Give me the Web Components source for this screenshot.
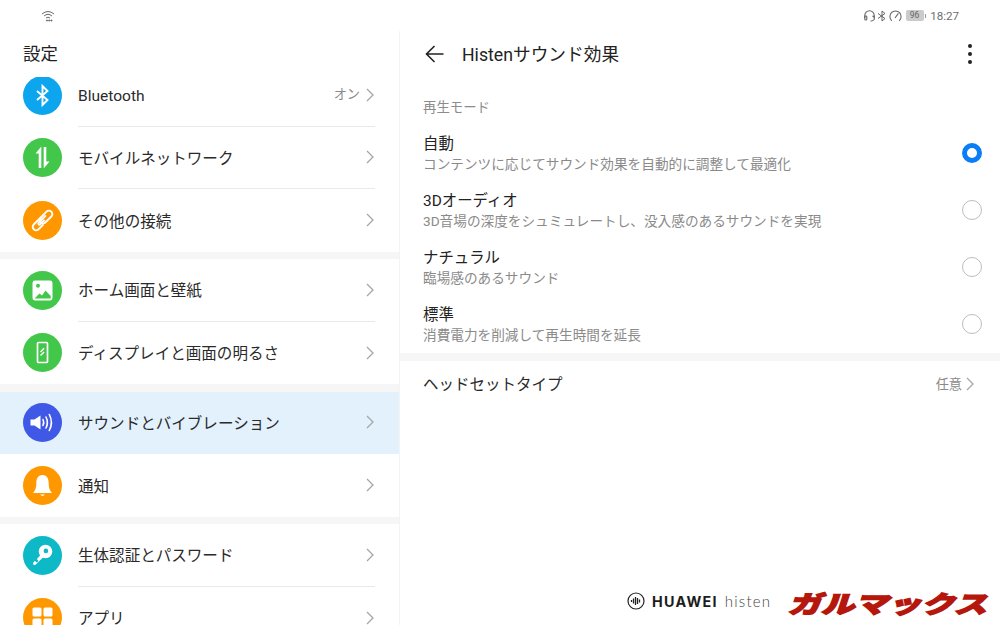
<!DOCTYPE html>
<html lang="ja">
<head>
<meta charset="utf-8">
<title>Histen</title>
<style>
html, body { margin: 0; padding: 0; background: #fff; }
body { width: 1000px; height: 625px; overflow: hidden; font-family: Roboto, "Noto Sans CJK JP", "Noto Sans", sans-serif; color: #1f1f1f; }
</style>
</head>
<body>
<tablet-screen>
	<status-bar slot="status"></status-bar>
	<settings-pane slot="left">
		<settings-group first>
			<settings-row label="Bluetooth" value="オン" color="#0ca5ee" icon="bt"></settings-row>
			<settings-row label="モバイルネットワーク" color="#43c74a" icon="mobile"></settings-row>
			<settings-row label="その他の接続" color="#ff9800" icon="link" last></settings-row>
		</settings-group>
		<settings-group>
			<settings-row label="ホーム画面と壁紙" color="#43c74a" icon="image"></settings-row>
			<settings-row label="ディスプレイと画面の明るさ" color="#43c74a" icon="phone" last></settings-row>
		</settings-group>
		<settings-group>
			<settings-row label="サウンドとバイブレーション" color="#4058e6" icon="sound" active></settings-row>
			<settings-row label="通知" color="#ff9800" icon="bell" last></settings-row>
		</settings-group>
		<settings-group>
			<settings-row label="生体認証とパスワード" color="#0db9c6" icon="key"></settings-row>
			<settings-row label="アプリ" color="#ff9800" icon="apps" last></settings-row>
		</settings-group>
	</settings-pane>
	<histen-pane slot="right">
		<option-row title="自動" sub="コンテンツに応じてサウンド効果を自動的に調整して最適化" checked></option-row>
		<option-row title="3Dオーディオ" sub="3D音場の深度をシュミュレートし、没入感のあるサウンドを実現"></option-row>
		<option-row title="ナチュラル" sub="臨場感のあるサウンド"></option-row>
		<option-row title="標準" sub="消費電力を削減して再生時間を延長"></option-row>
	</histen-pane>
	<brand-marks slot="marks"></brand-marks>
</tablet-screen>

<script>
(function() {
	var CHEVRON = '<svg width="8" height="14" viewBox="0 0 8 14" style="flex:none;margin-right:1px"><path d="M1 1 L7 7 L1 13" fill="none" stroke="#a6a6a6" stroke-width="1.3"/></svg>';

	// icon glyphs, 0,0 is the middle of the circle
	var ICONS = {
		bt: '<path d="M-5.5 -4.5 L5 4.5 L0 9.5 V-9.5 L5 -4.5 L-5.5 4.5" fill="none" stroke="#fff" stroke-width="1.9"/>',
		mobile: '<path d="M-1.2 10.5 V-11 L-7 -4 H-3.8 V10.5 Z M1.2 -10.5 V11 L7 4 H3.8 V-10.5 Z" fill="#fff"/>',
		link: '<g fill="none" stroke="#fff" stroke-width="1.9" transform="rotate(45)"><rect x="-3.4" y="-12.5" width="6.8" height="15" rx="3.4"/><path d="M-1.2 -6 V4 Q-1.2 5.5 0 5.5 Q1.2 5.5 1.2 4 V-2"/><path d="M-3.4 -1 V9 A3.4 3.4 0 0 0 3.4 9 V2"/></g>',
		image: '<rect x="-10" y="-10" width="20" height="20" rx="2.4" fill="#fff"/><circle cx="-4.5" cy="-4.8" r="2" fill="#43c74a"/><path d="M-8 8 L-3 3 L-0.5 5 L3 0 L8.2 5.5 V8 Z" fill="#43c74a"/>',
		phone: '<rect x="-5" y="-10" width="10" height="20" rx="1" fill="none" stroke="#fff" stroke-width="1.7"/><path d="M-2 -0.5 L1.6 -4.2 M-2 3 L1.6 -0.6" stroke="#fff" stroke-width="1.4"/>',
		sound: '<path d="M-12 -3 H-8 L-2 -7 V7 L-8 3 H-12 Z" fill="#fff"/><g fill="none" stroke="#fff" stroke-width="1.6" stroke-linecap="round"><path d="M0.5 -3 Q2 0 0.5 3"/><path d="M3.5 -5.5 Q6.2 0 3.5 5.5"/><path d="M6.8 -8 Q11 0 6.8 8"/></g>',
		bell: '<path d="M0 -10.5 C-5 -10.5 -6.2 -6 -6.2 -2 C-6.2 2 -7 5 -9.5 7.5 H9.5 C7 5 6.2 2 6.2 -2 C6.2 -6 5 -10.5 0 -10.5 Z" fill="#fff"/><path d="M-2.4 9 H2.4 Q0 11.8 -2.4 9 Z" fill="#fff"/>',
		key: '<circle cx="3" cy="-4" r="6.8" fill="#fff"/><circle cx="3.4" cy="-4.6" r="2.3" fill="#0db9c6"/><path d="M-1.5 -1 L1 1.5 L-7 9.2 Q-8 10 -9.2 9 Q-10 8 -9.2 7 L-7.6 5.4 L-5.6 7 L-4 5.4 L-5.6 3.6 Z" fill="#fff"/>',
		apps: '<g fill="#fff"><rect x="-10" y="-10" width="9" height="9" rx="1.6"/><rect x="1" y="-10" width="9" height="9" rx="1.6"/><rect x="-10" y="1" width="9" height="9" rx="1.6"/><rect x="1" y="1" width="9" height="9" rx="1.6"/></g>'
	};

	class TabletScreen extends HTMLElement {
		constructor() {
			super();
			this.attachShadow({mode: "open"}).innerHTML = `
				<style>
				:host { display: grid; grid-template-columns: 400px 600px; grid-template-rows: 31px 594px; width: 1000px; height: 625px; position: relative; overflow: hidden; background: #fff; }
				.status { grid-column: 1 / 3; }
				.left { display: block; min-height: 0; border-right: 1px solid #f4f4f4; box-sizing: border-box; }
				</style>
				<div class="status"><slot name="status"></slot></div>
				<div class="left"><slot name="left"></slot></div>
				<div><slot name="right"></slot></div>
				<slot name="marks"></slot>
			`;
		}
	}

	class StatusBar extends HTMLElement {
		constructor() {
			super();
			this.attachShadow({mode: "open"}).innerHTML = `
				<style>
				:host { display: flex; align-items: center; justify-content: space-between; height: 31px; padding: 0 41px 0 41px; box-sizing: border-box; color: #707070; }
				.right { display: flex; align-items: center; gap: 2px; }
				.time { font: 11.6px "Roboto", sans-serif; margin-left: 2px; }
				.batt { display: flex; align-items: center; margin-left: 2px; }
				.cell { width: 18px; height: 11px; background: #cbcbcb; border-radius: 2px; font: 8.5px/11px "Roboto", sans-serif; text-align: center; color: #666; }
				.tip { width: 1.5px; height: 4px; background: #999; margin-left: 1px; }
				svg { display: block; }
				</style>
				<svg width="14" height="12" viewBox="0 0 14 12" fill="none" stroke="#6b6b6b" stroke-width="1"><path d="M1 4 Q7 -1 13 4"/><path d="M3 6 Q7 2.6 11 6"/><path d="M5 8 Q7 6.4 9 8"/><circle cx="6" cy="10.5" r=".6" fill="#6b6b6b"/><circle cx="8.2" cy="10.5" r=".6" fill="#6b6b6b"/><circle cx="10.4" cy="10.5" r=".6" fill="#6b6b6b"/></svg>
				<div class="right">
					<svg width="11" height="12" viewBox="0 0 11 12" fill="none" stroke="#666" stroke-width="1.1"><path d="M.8 8 V5.5 A4.7 4.7 0 0 1 10.2 5.5 V8"/><rect x=".8" y="6" width="2" height="4" rx=".8"/><path d="M8.2 6.2 H10.2 V9.5 Q8.6 11.4 6.5 11"/></svg>
					<svg width="10" height="12" viewBox="0 0 10 12" fill="none" stroke="#666" stroke-width="1"><path d="M1 3.5 L8 8.5 L5 11 V1 L8 3.5 L1 8.5"/></svg>
					<svg width="13" height="12" viewBox="0 0 13 12" fill="none" stroke="#666" stroke-width="1.1"><path d="M2.8 10.8 A5.6 5.6 0 1 1 10.2 10.8"/><path d="M6 8 L9.4 3.4"/></svg>
					<div class="batt"><div class="cell">96</div><div class="tip"></div></div>
					<span class="time">18:27</span>
				</div>
			`;
		}
	}

	class SettingsPane extends HTMLElement {
		constructor() {
			super();
			this.attachShadow({mode: "open"}).innerHTML = `
				<style>
				:host { display: flex; flex-direction: column; height: 594px; overflow: hidden; }
				h1 { margin: 0; padding: 0 0 0 23px; height: 46px; font-size: 17.4px; font-weight: 400; line-height: 46px; flex: none; color: #222; }
				.list { flex: 1; overflow: hidden; min-height: 0; }
				.inner { margin-top: -13px; display: flex; flex-direction: column; gap: 7.5px; }
				</style>
				<h1>設定</h1>
				<div class="list"><div class="inner"><slot></slot></div></div>
			`;
		}
	}

	class SettingsGroup extends HTMLElement {
		constructor() {
			super();
			this.attachShadow({mode: "open"}).innerHTML = `
				<style>
				:host { display: block; position: relative; }
				:host::before { content: ""; position: absolute; left: 0; right: 0; top: -7.5px; height: 7.5px; background: #f6f6f6; }
				:host([first])::before { display: none; }
				</style>
				<slot></slot>
			`;
		}
	}

	class SettingsRow extends HTMLElement {
		constructor() {
			super();
			var label = this.getAttribute("label");
			var value = this.getAttribute("value") || "";
			var color = this.getAttribute("color");
			var icon = ICONS[this.getAttribute("icon")];
			this.attachShadow({mode: "open"}).innerHTML = `
				<style>
				:host { display: block; height: 62.5px; font-size: 15.55px; color: #2a2a2a; }
				:host([active]) { background: #e3f1fd; }
				.wrap { display: flex; align-items: center; height: 100%; padding-left: 23px; padding-right: 24px; box-sizing: border-box; }
				.dot { width: 39px; height: 39px; border-radius: 50%; flex: none; display: flex; background: ${color}; }
				.body { flex: 1; display: flex; align-items: center; height: 100%; margin-left: 16px; border-bottom: 1px solid #e9e9e9; box-sizing: border-box; }
				:host([last]) .body { border-bottom: 0; }
				:host([active]) .body { border-bottom-color: #e3f1fd; }
				.label { flex: 1; line-height: 20px; margin-top: 3px; }
				.value { font-size: 13.2px; line-height: 20px; color: #8a8a8a; margin-right: 6px; }
				svg { display: block; }
				</style>
				<div class="wrap">
					<div class="dot"><svg width="39" height="39" viewBox="-19.5 -19.5 39 39">${icon}</svg></div>
					<div class="body">
						<span class="label">${label}</span>
						<span class="value">${value}</span>
						${CHEVRON}
					</div>
				</div>
			`;
		}
	}

	class HistenPane extends HTMLElement {
		constructor() {
			super();
			this.attachShadow({mode: "open"}).innerHTML = `
				<style>
				:host { display: block; height: 594px; }
				header { display: flex; align-items: center; height: 46px; padding-left: 25px; }
				header svg.back { display: block; flex: none; }
				h2 { margin: 1px 0 0 18px; font-size: 17.7px; font-weight: 400; line-height: 24px; flex: 1; color: #222; }
				.more { display: flex; flex-direction: column; gap: 4px; margin-right: 28px; }
				.more i { width: 4px; height: 4px; background: #222; border-radius: 50%; display: block; }
				.section { font-size: 13.4px; color: #8c8c8c; padding: 21px 0 0 23px; height: 26.5px; line-height: 20px; }
				.gap { height: 8px; background: #f6f6f6; }
				.head { display: flex; align-items: center; height: 48px; padding: 0 25px 0 23px; font-size: 15.5px; color: #2a2a2a; margin-top: -1px; }
				.head span:first-child { flex: 1; margin-top: -1px; }
				.head .val { font-size: 13.2px; color: #8a8a8a; margin-right: 4px; margin-top: -1px; }
				</style>
				<header>
					<svg class="back" width="19" height="18" viewBox="0 0 19 18" fill="none" stroke="#222" stroke-width="1.6"><path d="M18.5 9 H1.5 M9.5 1 L1.5 9 L9.5 17"/></svg>
					<h2>Histenサウンド効果</h2>
					<div class="more"><i></i><i></i><i></i></div>
				</header>
				<div class="section">再生モード</div>
				<slot></slot>
				<div class="gap"></div>
				<div class="head"><span>ヘッドセットタイプ</span><span class="val">任意</span>${CHEVRON}</div>
			`;
		}
	}

	class OptionRow extends HTMLElement {
		constructor() {
			super();
			var checked = this.hasAttribute("checked");
			this.attachShadow({mode: "open"}).innerHTML = `
				<style>
				:host { display: grid; grid-template-columns: 1fr 20px; align-items: center; height: 57px; padding: 0 18px 0 23px; box-sizing: border-box; }
				.t { font-size: 15.4px; color: #222; line-height: 20px; margin-top: 1px; }
				.s { font-size: 13.65px; color: #8a8a8a; line-height: 20px; }
				.r { width: 20px; height: 20px; border-radius: 50%; box-sizing: border-box; border: 1px solid #bdbdbd; }
				.r.on { border: 5px solid #0a7ff5; }
				</style>
				<div>
					<div class="t">${this.getAttribute("title")}</div>
					<div class="s">${this.getAttribute("sub")}</div>
				</div>
				<div class="r${checked ? " on" : ""}"></div>
			`;
		}
	}

	class BrandMarks extends HTMLElement {
		constructor() {
			super();
			this.attachShadow({mode: "open"}).innerHTML = `
				<style>
				:host { position: absolute; left: 627px; top: 586px; display: flex; align-items: center; height: 30px; }
				.h { font: 700 14.3px "Inter", "Liberation Sans", sans-serif; color: #1c1c1c; margin-left: 7px; letter-spacing: 1.3px; }
				.n { font: 300 15px "Lato", "Liberation Sans", sans-serif; color: #444; margin-left: 7px; letter-spacing: 1.2px; }
				.g { font: 900 24px/30px "Noto Sans CJK JP", sans-serif; color: #b5170d; -webkit-text-stroke: 1.4px #b5170d; transform: translateY(2px) skewX(-18deg) scaleX(1.39); transform-origin: left center; margin-left: 20px; white-space: nowrap; width: 150px; }
				svg { display: block; }
				</style>
				<svg width="18" height="18" viewBox="0 0 18 18"><circle cx="9" cy="9" r="8" fill="none" stroke="#222" stroke-width="1.2"/><path d="M4.5 8 V10 M6.5 6.5 V11.5 M8.5 5 V13 M10.5 6 V12 M12.5 7.5 V10.5" stroke="#222" stroke-width="1.3"/></svg>
				<span class="h">HUAWEI</span><span class="n">histen</span>
				<span class="g">ガルマックス</span>
			`;
		}
	}

	customElements.define("tablet-screen", TabletScreen);
	customElements.define("status-bar", StatusBar);
	customElements.define("settings-pane", SettingsPane);
	customElements.define("settings-group", SettingsGroup);
	customElements.define("settings-row", SettingsRow);
	customElements.define("histen-pane", HistenPane);
	customElements.define("option-row", OptionRow);
	customElements.define("brand-marks", BrandMarks);
})();
</script>
</body>
</html>
